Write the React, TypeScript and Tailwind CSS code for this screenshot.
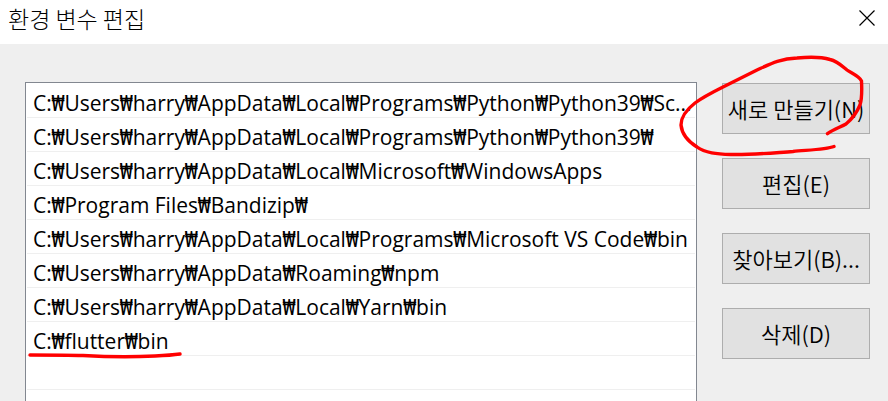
import React from "react";

interface PathEntry {
  value: string;
  marked?: boolean;
}

interface Action {
  label: string;
  circled?: boolean;
}

const entries: PathEntry[] = [
  { value: "C:₩Users₩harry₩AppData₩Local₩Programs₩Python₩Python39₩Sc..." },
  { value: "C:₩Users₩harry₩AppData₩Local₩Programs₩Python₩Python39₩" },
  { value: "C:₩Users₩harry₩AppData₩Local₩Microsoft₩WindowsApps" },
  { value: "C:₩Program Files₩Bandizip₩" },
  { value: "C:₩Users₩harry₩AppData₩Local₩Programs₩Microsoft VS Code₩bin" },
  { value: "C:₩Users₩harry₩AppData₩Roaming₩npm" },
  { value: "C:₩Users₩harry₩AppData₩Local₩Yarn₩bin" },
  { value: "C:₩flutter₩bin", marked: true },
  { value: "" },
  { value: "" },
];

const actions: Action[] = [
  { label: "새로 만들기(N)", circled: true },
  { label: "편집(E)" },
  { label: "찾아보기(B)..." },
  { label: "삭제(D)" },
];

function Underline() {
  return (
    <svg
      className="pointer-events-none absolute -bottom-1 left-0 z-10"
      width="158"
      height="10"
      viewBox="0 0 158 10"
      fill="none"
    >
      <path
        d="M3 6 C22 6 40 6 56 6.500 C82 8 108 8 128 7 C139 6.500 146 6 153 5"
        stroke="#ff0000"
        strokeWidth="3.4"
        strokeLinecap="round"
      />
    </svg>
  );
}

function Circle() {
  return (
    <svg
      className="pointer-events-none absolute -left-12 -top-8 z-10"
      width="196"
      height="110"
      viewBox="674 51 196 110"
      fill="none"
    >
      <path
        d="M827.5 133.7 C834 129 841 127 846 124 C852 119 857 112 860 105 C862 99 862 91 861.500 81 C859 76 851 73 847 70 C841 65 837 61 830 59.500 C820 56.500 808 57 797 58 C780 58.500 770 64 757 70 L723 87 C711 93 703 97 695 103 C686 110 681 117 681 125 C682 135 689 142 697 147 C705 153 717 154 731 154.500 C751 155 771 153 793 151.500 C808 150 826 149.500 834 146.500"
        stroke="#ff0000"
        strokeWidth="3.4"
        strokeLinecap="round"
        strokeLinejoin="round"
      />
    </svg>
  );
}

export default function App() {
  return (
    <div className="flex h-screen flex-col overflow-hidden bg-[#efefef] font-['Noto_Sans_CJK_KR',sans-serif] text-black">
      {/* Title bar */}
      <header className="flex h-11 shrink-0 items-center justify-between bg-white pl-2 pr-3">
        <h1 className="pb-2 text-[23px] font-light leading-8">환경 변수 편집</h1>
        <button type="button" aria-label="닫기" className="pb-2">
          <svg width="18" height="18" viewBox="0 0 18 18" fill="none">
            <path d="M1.500 1.500 L16.500 16.500 M16.500 1.500 L1.500 16.500" stroke="#000" strokeWidth="1.2" />
          </svg>
        </button>
      </header>

      <main className="flex min-h-0 flex-1 items-start gap-[25px] pl-[25px] pr-[18px] pt-[38px]">
        {/* Path list, runs on below the window edge */}
        <ul className="min-w-0 flex-1 border border-[#828790] bg-white px-px pb-8 pt-px font-['Open_Sans','DejaVu_Sans_Mono',sans-serif]">
          {entries.map((entry, i) => (
            <li
              key={i}
              className="relative h-[34px] whitespace-nowrap border-b border-[#efefef] pl-1.5 pt-1 text-[21px] leading-[30px]"
            >
              {entry.value}
              {entry.marked && <Underline />}
            </li>
          ))}
        </ul>

        <div className="flex w-[148px] shrink-0 flex-col gap-6 pt-px">
          {actions.map((action) => (
            <div key={action.label} className="relative">
              <button
                type="button"
                className="flex h-[51px] w-full items-center justify-center whitespace-nowrap border border-[#adadad] bg-[#e1e1e1] text-[22px] font-[350]"
              >
                {action.label}
              </button>
              {action.circled && <Circle />}
            </div>
          ))}
        </div>
      </main>
    </div>
  );
}
